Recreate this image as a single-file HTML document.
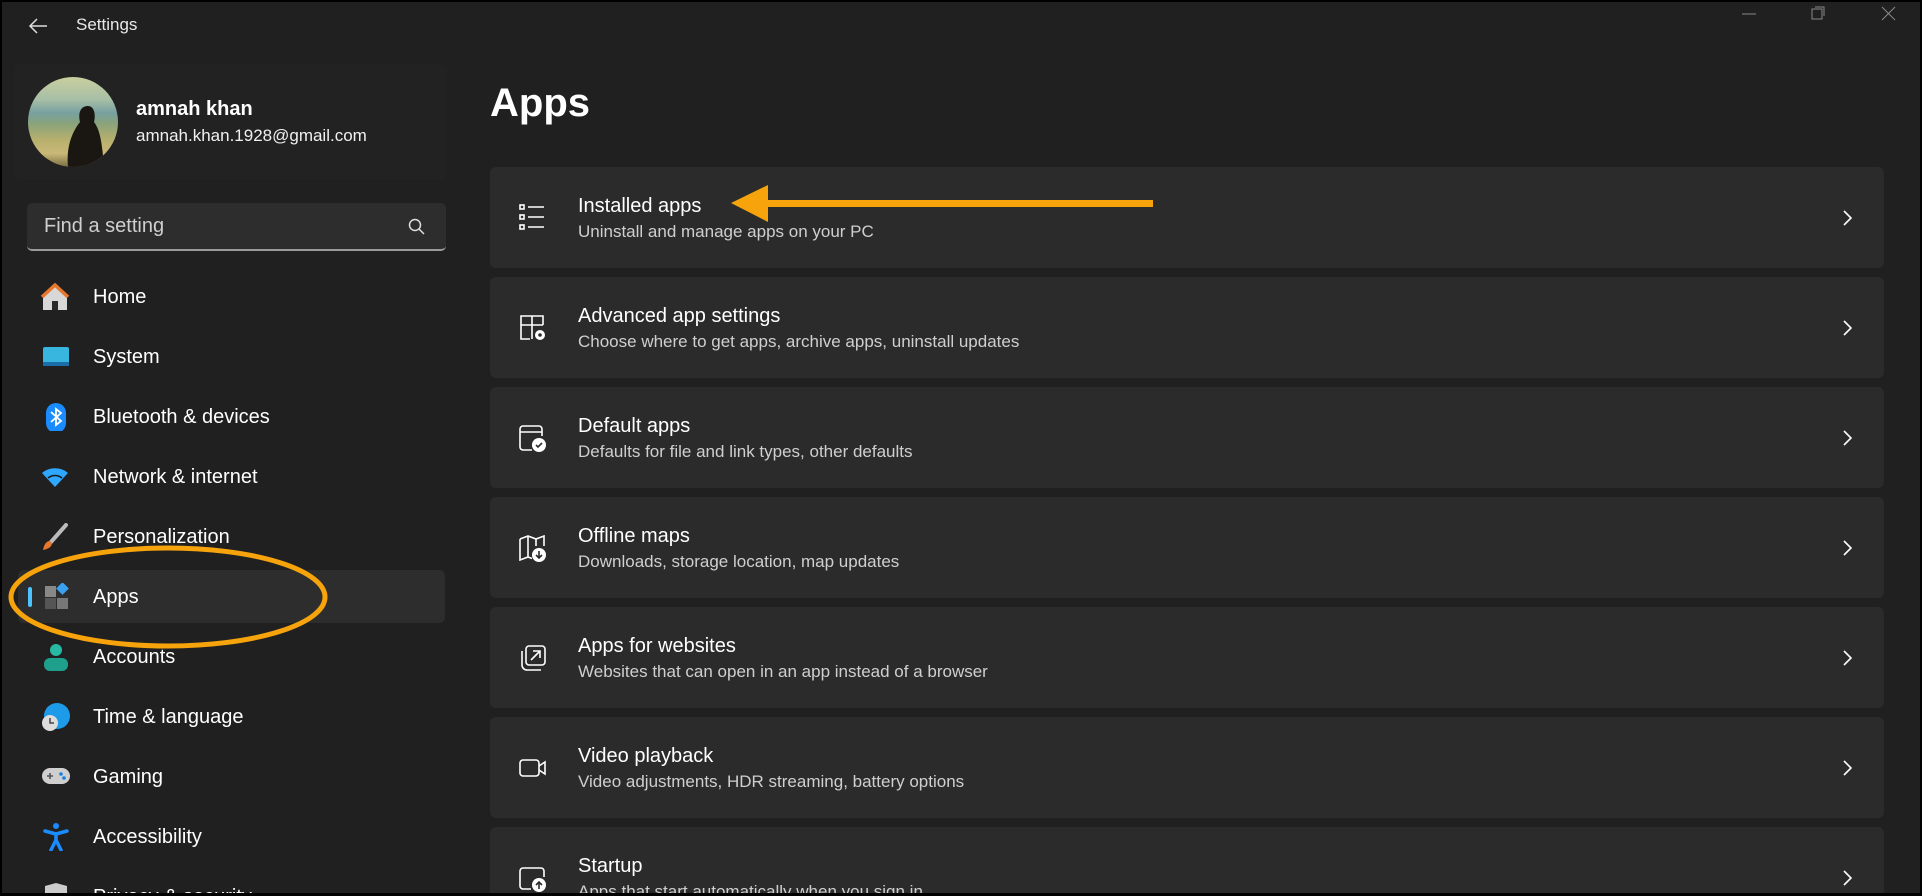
<!DOCTYPE html>
<html><head><meta charset="utf-8">
<style>
*{margin:0;padding:0;box-sizing:border-box}
html,body{width:1922px;height:896px;overflow:hidden}
body{background:#202020;font-family:"Segoe UI","Liberation Sans",sans-serif;color:#fff}
#w{position:relative;width:1922px;height:896px;overflow:hidden;background:#202020}
.frame{position:absolute;inset:0;border:2px solid #000;border-bottom-width:3px;pointer-events:none;z-index:10}
.abs{position:absolute}
.title{left:76px;top:15px;font-size:17px;color:#e8e8e8}
.profile{left:14px;top:64px;width:432px;height:116px;background:#222;border-radius:6px}
.avatar{left:28px;top:77px;width:90px;height:90px;border-radius:50%;overflow:hidden;background:linear-gradient(180deg,#c9cf9f 0,#a7bfa6 25%,#77a0a0 40%,#8aa37a 52%,#b8b06e 70%,#c9b877 85%,#7a6f42 100%)}
.name{left:136px;top:98px;font-size:20px;font-weight:bold}
.email{left:136px;top:126px;font-size:17px;color:#f0f0f0}
.search{left:27px;top:203px;width:419px;height:48px;background:#2d2d2d;border-radius:5px;border-bottom:2px solid #9a9a9a}
.search span{position:absolute;left:17px;top:12px;font-size:20px;color:#cfcfcf}
.nav{left:40px;font-size:20px;color:#fff;height:30px;line-height:30px}
.nav .ic{position:absolute;left:0;top:1px;width:30px;height:28px}
.nav .t{position:absolute;left:53px;white-space:nowrap}
.sel{left:18px;top:570px;width:427px;height:53px;background:#2d2d2d;border-radius:6px}
.ind{left:28px;top:587px;width:4px;height:20px;background:#4cc2ff;border-radius:2px}
h1{position:absolute;left:490px;top:81px;font-size:40px;font-weight:600}
.card{position:absolute;left:490px;width:1394px;height:101px;background:#2b2b2b;border-radius:6px}
.card .ct{position:absolute;left:88px;top:28px;font-size:20px}
.card .cs{position:absolute;left:88px;top:55px;font-size:17px;color:#cfcfcf}
.card svg.i{position:absolute;left:28px;top:36px}
.card svg.ch{position:absolute;left:1352px;top:42px}
</style></head><body><div id="w">
<div class="frame"></div>
<svg class="abs" style="left:28px;top:17px" width="20" height="18" viewBox="0 0 20 18"><path d="M19 9H2M9 2L2 9l7 7" stroke="#ddd" stroke-width="1.5" fill="none"/></svg>
<div class="abs title">Settings</div>
<svg class="abs" style="left:1742px;top:6px" width="160" height="20"><path d="M0 8h14" stroke="#888" stroke-width="1"/><rect x="70" y="3" width="10" height="10" fill="none" stroke="#888"/><path d="M73 1h9v9" stroke="#888" fill="none"/><path d="M140 1l13 13M153 1l-13 13" stroke="#888"/></svg>

<div class="abs profile"></div>
<div class="abs avatar"><svg width="90" height="90"><path d="M40 90C38 70 44 55 52 45c-2-8 0-16 8-16 6 0 8 8 6 16 6 8 8 20 10 45z" fill="#1a1712"/></svg></div>
<div class="abs name">amnah khan</div>
<div class="abs email">amnah.khan.1928@gmail.com</div>
<div class="abs search"><span>Find a setting</span>
<svg style="position:absolute;left:381px;top:15px" width="18" height="18"><circle cx="7" cy="7" r="5.5" stroke="#ddd" stroke-width="1.5" fill="none"/><path d="M11 11l5 5" stroke="#ddd" stroke-width="1.5"/></svg></div>

<div class="abs sel"></div><div class="abs ind"></div>

<div class="abs nav" style="top:282px"><svg class="ic" viewBox="0 0 30 28"><path d="M3 14L15 3l12 11v13H3z" fill="#d8d8d8"/><path d="M2 14L15 2l13 12" stroke="#e8772e" stroke-width="3.5" fill="none"/><rect x="12" y="18" width="6" height="9" fill="#2a2a2a"/></svg><span class="t">Home</span></div>
<div class="abs nav" style="top:342px"><svg class="ic" viewBox="0 0 30 28"><rect x="3" y="4" width="26" height="18" rx="2" fill="#38b6e0"/><rect x="3" y="19" width="26" height="4" fill="#1a6fa8"/></svg><span class="t">System</span></div>
<div class="abs nav" style="top:402px"><svg class="ic" viewBox="0 0 30 28"><rect x="6" y="0" width="20" height="30" rx="10" fill="#1a8cff"/><path d="M11 9l10 9-5 4V6l5 4-10 9" stroke="#fff" stroke-width="1.8" fill="none"/></svg><span class="t">Bluetooth &amp; devices</span></div>
<div class="abs nav" style="top:462px"><svg class="ic" viewBox="0 0 30 28"><path d="M2 10a20 20 0 0 1 26 0L15 24z" fill="#2ea7ff"/><path d="M8 15a11 11 0 0 1 14 0" stroke="#1b1b1b" stroke-width="1.5" fill="none"/></svg><span class="t">Network &amp; internet</span></div>
<div class="abs nav" style="top:522px"><svg class="ic" viewBox="0 0 30 28"><path d="M26 2L11 19" stroke="#bbb" stroke-width="4" stroke-linecap="round"/><path d="M10 18c-4 0-6 4-7 9 5-1 9-3 9-7z" fill="#e8772e"/></svg><span class="t">Personalization</span></div>
<div class="abs nav" style="top:582px"><svg class="ic" viewBox="0 0 30 28"><rect x="5" y="3" width="11" height="11" fill="#888"/><rect x="5" y="15" width="11" height="11" fill="#555"/><rect x="17" y="15" width="11" height="11" fill="#777"/><rect x="18" y="1" width="9" height="9" transform="rotate(45 22.5 5.5)" fill="#3aa0f0"/></svg><span class="t">Apps</span></div>
<div class="abs nav" style="top:642px"><svg class="ic" viewBox="0 0 30 28"><circle cx="16" cy="7" r="6" fill="#27b9a3"/><rect x="4" y="15" width="24" height="13" rx="6" fill="#1fa08c"/></svg><span class="t">Accounts</span></div>
<div class="abs nav" style="top:702px"><svg class="ic" viewBox="0 0 30 28"><circle cx="17" cy="13" r="13" fill="#1e9be8"/><circle cx="10" cy="20" r="8" fill="#ddd"/><path d="M10 15v5h4" stroke="#444" stroke-width="1.5" fill="none"/></svg><span class="t">Time &amp; language</span></div>
<div class="abs nav" style="top:762px"><svg class="ic" viewBox="0 0 30 28"><rect x="2" y="5" width="28" height="16" rx="8" fill="#cfcfcf"/><path d="M7 13h6M10 10v6" stroke="#555" stroke-width="1.6"/><circle cx="21" cy="11" r="1.8" fill="#1a7fe0"/><circle cx="24" cy="15" r="1.8" fill="#1a7fe0"/></svg><span class="t">Gaming</span></div>
<div class="abs nav" style="top:822px"><svg class="ic" viewBox="0 0 30 28"><circle cx="16" cy="3" r="3" fill="#1a8cff"/><path d="M5 8l11 3 11-3M16 11v6l-5 10M16 17l5 10" stroke="#1a8cff" stroke-width="3.5" fill="none" stroke-linecap="round"/></svg><span class="t">Accessibility</span></div>
<div class="abs nav" style="top:882px"><svg class="ic" viewBox="0 0 30 28"><path d="M5 3l11-3 11 3v10H5z" fill="#ccc"/></svg><span class="t">Privacy &amp; security</span></div>

<svg class="abs" style="left:0;top:540px" width="340" height="120"><ellipse cx="168" cy="57" rx="157" ry="49" stroke="#f7a30c" stroke-width="5" fill="none"/></svg>

<h1>Apps</h1>

<div class="card" style="top:167px"><svg class="i" width="30" height="30" viewBox="0 0 30 30"><g stroke="#fff" stroke-width="1.6" fill="none"><rect x="2" y="2" width="4" height="4"/><rect x="2" y="12" width="4" height="4"/><rect x="2" y="22" width="4" height="4"/><path d="M10 4h16M10 14h16M10 24h16"/></g></svg><div class="ct">Installed apps</div><div class="cs">Uninstall and manage apps on your PC</div><svg class="ch" width="12" height="18"><path d="M2 2l7 7-7 7" stroke="#fff" stroke-width="1.6" fill="none"/></svg></div>
<div class="card" style="top:277px"><svg class="i" width="30" height="30" viewBox="0 0 30 30"><g stroke="#fff" stroke-width="1.6" fill="none"><path d="M12 26H3V3h22v9M3 12h22M14 3v23"/></g><circle cx="22" cy="22" r="5" fill="#fff"/><circle cx="22" cy="22" r="1.8" fill="#2b2b2b"/></svg><div class="ct">Advanced app settings</div><div class="cs">Choose where to get apps, archive apps, uninstall updates</div><svg class="ch" width="12" height="18"><path d="M2 2l7 7-7 7" stroke="#fff" stroke-width="1.6" fill="none"/></svg></div>
<div class="card" style="top:387px"><svg class="i" width="30" height="30" viewBox="0 0 30 30"><g stroke="#fff" stroke-width="1.6" fill="none"><path d="M14 27H5a3 3 0 0 1-3-3V6a3 3 0 0 1 3-3h16a3 3 0 0 1 3 3v7M2 9h22"/></g><circle cx="21" cy="22" r="7" fill="#fff"/><path d="M18 22l2 2 4-4" stroke="#2b2b2b" stroke-width="1.6" fill="none"/></svg><div class="ct">Default apps</div><div class="cs">Defaults for file and link types, other defaults</div><svg class="ch" width="12" height="18"><path d="M2 2l7 7-7 7" stroke="#fff" stroke-width="1.6" fill="none"/></svg></div>
<div class="card" style="top:497px"><svg class="i" width="30" height="30" viewBox="0 0 30 30"><g stroke="#fff" stroke-width="1.6" fill="none"><path d="M2 6l8-3 8 3 8-3v10M2 6v21l8-3 4 1.5M10 3v21M18 6v7"/></g><circle cx="21" cy="22" r="7" fill="#fff"/><path d="M21 18v7M18 22l3 3 3-3" stroke="#2b2b2b" stroke-width="1.6" fill="none"/></svg><div class="ct">Offline maps</div><div class="cs">Downloads, storage location, map updates</div><svg class="ch" width="12" height="18"><path d="M2 2l7 7-7 7" stroke="#fff" stroke-width="1.6" fill="none"/></svg></div>
<div class="card" style="top:607px"><svg class="i" width="30" height="30" viewBox="0 0 30 30"><g stroke="#fff" stroke-width="1.6" fill="none"><rect x="8" y="3" width="19" height="19" rx="3"/><path d="M4 8v14a5 5 0 0 0 5 5h14M13 17l9-9M15 8h7v7"/></g></svg><div class="ct">Apps for websites</div><div class="cs">Websites that can open in an app instead of a browser</div><svg class="ch" width="12" height="18"><path d="M2 2l7 7-7 7" stroke="#fff" stroke-width="1.6" fill="none"/></svg></div>
<div class="card" style="top:717px"><svg class="i" width="30" height="30" viewBox="0 0 30 30"><g stroke="#fff" stroke-width="1.6" fill="none"><rect x="2" y="7" width="19" height="16" rx="3"/><path d="M21 13l6-4v12l-6-4"/></g></svg><div class="ct">Video playback</div><div class="cs">Video adjustments, HDR streaming, battery options</div><svg class="ch" width="12" height="18"><path d="M2 2l7 7-7 7" stroke="#fff" stroke-width="1.6" fill="none"/></svg></div>
<div class="card" style="top:827px"><svg class="i" width="30" height="30" viewBox="0 0 30 30"><g stroke="#fff" stroke-width="1.6" fill="none"><path d="M13 26H5a3 3 0 0 1-3-3V8a3 3 0 0 1 3-3h18a3 3 0 0 1 3 3v6"/></g><circle cx="21" cy="22" r="7" fill="#fff"/><path d="M21 26v-7M18 22l3-3 3 3" stroke="#2b2b2b" stroke-width="1.6" fill="none"/></svg><div class="ct">Startup</div><div class="cs">Apps that start automatically when you sign in</div><svg class="ch" width="12" height="18"><path d="M2 2l7 7-7 7" stroke="#fff" stroke-width="1.6" fill="none"/></svg></div>

<svg class="abs" style="left:728px;top:182px" width="430" height="44"><path d="M40 18H425v7H40z" fill="#f7a30c"/><path d="M3 21L40 3v37z" fill="#f7a30c"/></svg>
</div></body></html>
